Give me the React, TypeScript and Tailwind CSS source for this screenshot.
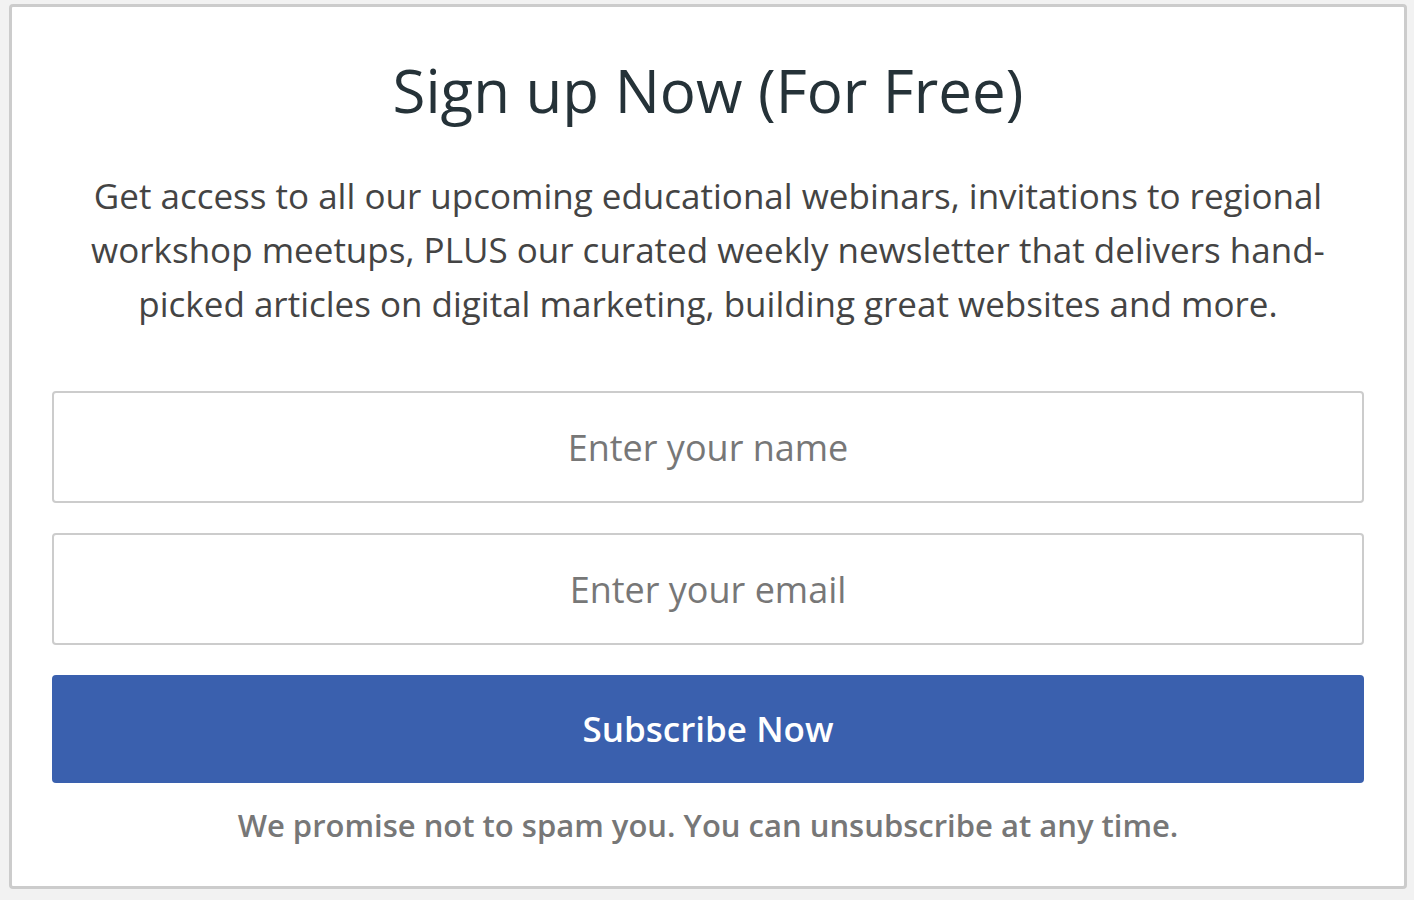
import React from 'react';

export default function App() {
    return (
        <div className="min-h-screen bg-[#f2f2f2] pl-[9px] pr-[7px] pt-1 pb-2.5 font-['Open_Sans',sans-serif]">
            <div className="rounded-[4px] border-[3px] border-[#cccccc] bg-white px-[40px] pt-[45px] pb-[39px]">
                <h1 className="text-center text-[60px] leading-[76px] font-normal text-[#253238]">
                    Sign up Now (For Free)
                </h1>
                <p className="mx-auto mt-[41px] max-w-[1260px] text-center text-[35px] leading-[54px] text-[#444444]">
                    Get access to all our upcoming educational webinars, invitations to regional workshop meetups, PLUS our curated weekly newsletter that delivers hand-picked articles on digital marketing, building great websites and more.
                </p>

                {/* Form */}
                <form className="mt-[60px] flex flex-col gap-[30px]" onSubmit={(e) => e.preventDefault()}>
                    <input
                        type="text"
                        placeholder="Enter your name"
                        className="h-[112px] w-full rounded-[4px] border-2 border-[#cccccc] text-center text-[36px] text-[#333] placeholder:text-[#777777] outline-none"
                    />
                    <input
                        type="email"
                        placeholder="Enter your email"
                        className="h-[112px] w-full rounded-[4px] border-2 border-[#cccccc] text-center text-[36px] text-[#333] placeholder:text-[#777777] outline-none"
                    />
                    <button
                        type="submit"
                        className="h-[108px] w-full rounded-[4px] bg-[#3a60ae] text-[35px] font-semibold text-white"
                    >
                        Subscribe Now
                    </button>
                </form>
                <p className="mt-[20px] text-center text-[31px] leading-[44px] font-semibold text-[#777777]">
                    We promise not to spam you. You can unsubscribe at any time.
                </p>
            </div>
        </div>
    );
}
